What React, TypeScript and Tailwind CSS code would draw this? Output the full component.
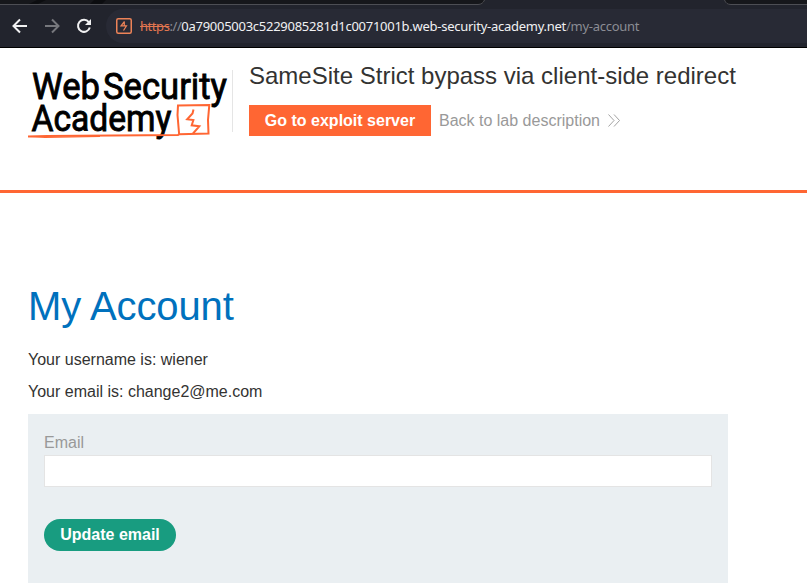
import React from 'react';

function TabStrip() {
  return (
    <div className="flex h-[5px] justify-between overflow-hidden">
      <svg width="486" height="5" viewBox="0 0 486 5" fill="none">
        <path d="M0 0H485C484 3 482 4.5 479 4.5H0Z" fill="#16171b" />
        <path d="M37 0H46L38 4H29ZM94 0H106L102 4H90Z" fill="#0c0d10" />
        <path d="M0 4.5H478C481 4.5 483.500 3 484.500 0" stroke="#4d4e54" />
      </svg>
      <svg width="84" height="5" viewBox="0 0 84 5" fill="none">
        <path d="M1 0C2 3 4 4.500 7 4.500H84V0Z" fill="#16171b" />
        <path d="M1.500 0C2.500 3 4.500 4.500 8 4.500H84" stroke="#4d4e54" />
      </svg>
    </div>
  );
}

function Toolbar() {
  return (
    <div className="flex h-[42px] items-center pl-3 pb-px">
      <svg width="16" height="16" viewBox="0 0 16 16" fill="none" stroke="#f1f1f2" strokeWidth="2">
        <path d="M15 8H2M8 1.500L1.500 8L8 14.500" />
      </svg>
      <svg className="ml-4" width="16" height="16" viewBox="0 0 16 16" fill="none" stroke="#77787d" strokeWidth="2">
        <path d="M1 8H14M8 1.500L14.500 8L8 14.500" />
      </svg>
      <svg className="ml-4" width="16" height="16" viewBox="0 0 16 16" fill="none" stroke="#f1f1f2" strokeWidth="2">
        <path d="M12.800 4.200A6 6 0 1 0 13.800 9.500" />
        <path d="M15 1V7H9Z" fill="#f1f1f2" stroke="none" />
      </svg>
      <div className="mt-px ml-[14px] flex h-[34px] flex-1 items-center rounded-l-full bg-[#282a35] pl-[10px]">
        <svg width="16" height="16" viewBox="0 0 16 16" fill="none">
          <rect x="0.750" y="0.750" width="14.500" height="14.500" rx="1.500" stroke="#ed8358" strokeWidth="1.500" />
          <path d="M8.500 3.500L5 7.800H10.500L7.500 12.500M8.300 3.500V7.500" stroke="#ed8358" strokeWidth="1.200" />
        </svg>
        <div className="ml-2 whitespace-nowrap font-['Noto_Sans',sans-serif] text-[13px] leading-[18px] tracking-[-0.265px] text-[#8b8d94]">
          <span className="tracking-[-0.44px]"><span className="text-[#e27650] line-through">https</span>://</span>
          <span className="text-[#f1f1f3]">0a79005003c5229085281d1c0071001b.web-security-academy.net</span>/my-account
        </div>
      </div>
    </div>
  );
}

function AcademyLogo() {
  return (
    <svg className="shrink-0 overflow-visible" width="204" height="84" viewBox="28 58 204 84" fill="none">
      <g fill="#000" stroke="#000" strokeWidth="0.900" fontFamily="Roboto, sans-serif" fontSize="37.500">
        <text x="32" y="98.500" textLength="68" lengthAdjust="spacingAndGlyphs">Web</text>
        <text x="103" y="98.500" textLength="124" lengthAdjust="spacingAndGlyphs">Security</text>
        <text x="31.500" y="131.200" textLength="140" lengthAdjust="spacingAndGlyphs">Academy</text>
      </g>
      <path d="M28 136.500L47 136L178 135L179.500 134.200L208.500 133.600L208 120L209.300 105L178 105.600L177.500 115L179.200 135" stroke="#ff6633" strokeWidth="2" />
      <path d="M29 136.500L45 137.500L100 136.400" stroke="#ff6633" strokeWidth="1.200" />
      <path d="M193.500 109.500L192.500 113.500L187.200 119.300L193.400 120L191.700 125.300L199.300 126.300L193 133.500" stroke="#ff6633" strokeWidth="2" />
    </svg>
  );
}

export default function App() {
  return (
    <div className="h-[585px] w-[807px] overflow-hidden bg-white font-['Liberation_Sans',Arial,sans-serif] text-base text-[#333332]">
      <header className="h-12 border-b border-black bg-[#22242d]">
        <TabStrip />
        <Toolbar />
      </header>
      <section className="flex h-[145px] border-b-3 border-[#ff6633] pl-7">
        <div className="mt-[10px]"><AcademyLogo /></div>
        <div className="mt-[22px] h-[62px] w-px bg-[#e5e5e5]" />
        <div className="ml-4 pt-[14px]">
          <h2 className="text-2xl leading-7">SameSite Strict bypass via client-side redirect</h2>
          <div className="mt-[15px] flex items-center">
            <button className="h-[31px] w-[182px] bg-[#ff6633] font-bold text-white">Go to exploit server</button>
            <a className="ml-2 flex items-center text-[#999]">
              Back to lab description
              <svg className="ml-2" width="13" height="13" viewBox="0 0 13 13" fill="none" stroke="#999" strokeWidth="0.900">
                <path d="M0.500 0.500L6 6.500L0.500 12.500M6 0.500L11.500 6.500L6 12.500" />
              </svg>
            </a>
          </div>
        </div>
      </section>
      <main className="pt-[90px] pl-7">
        <h1 className="text-[40px] leading-[46px] tracking-[-0.1px] text-[#0071bd]">My Account</h1>
        <p className="mt-[22px] leading-[18px]">Your username is: wiener</p>
        <p className="mt-[14px] leading-[18px]">Your email is: change2@me.com</p>
        <form className="mt-[13px] h-[169px] w-[700px] bg-[#eaeff2] px-4 pt-5">
          <label className="block leading-[18px] text-[#999]" htmlFor="email">Email</label>
          <input id="email" className="mt-[3px] block h-8 w-full border border-[#e4e4e4] bg-white px-2 outline-none" />
          <button type="button" className="mt-8 block h-8 w-[132px] rounded-full bg-[#189c80] font-bold text-white">Update email</button>
        </form>
      </main>
    </div>
  );
}
